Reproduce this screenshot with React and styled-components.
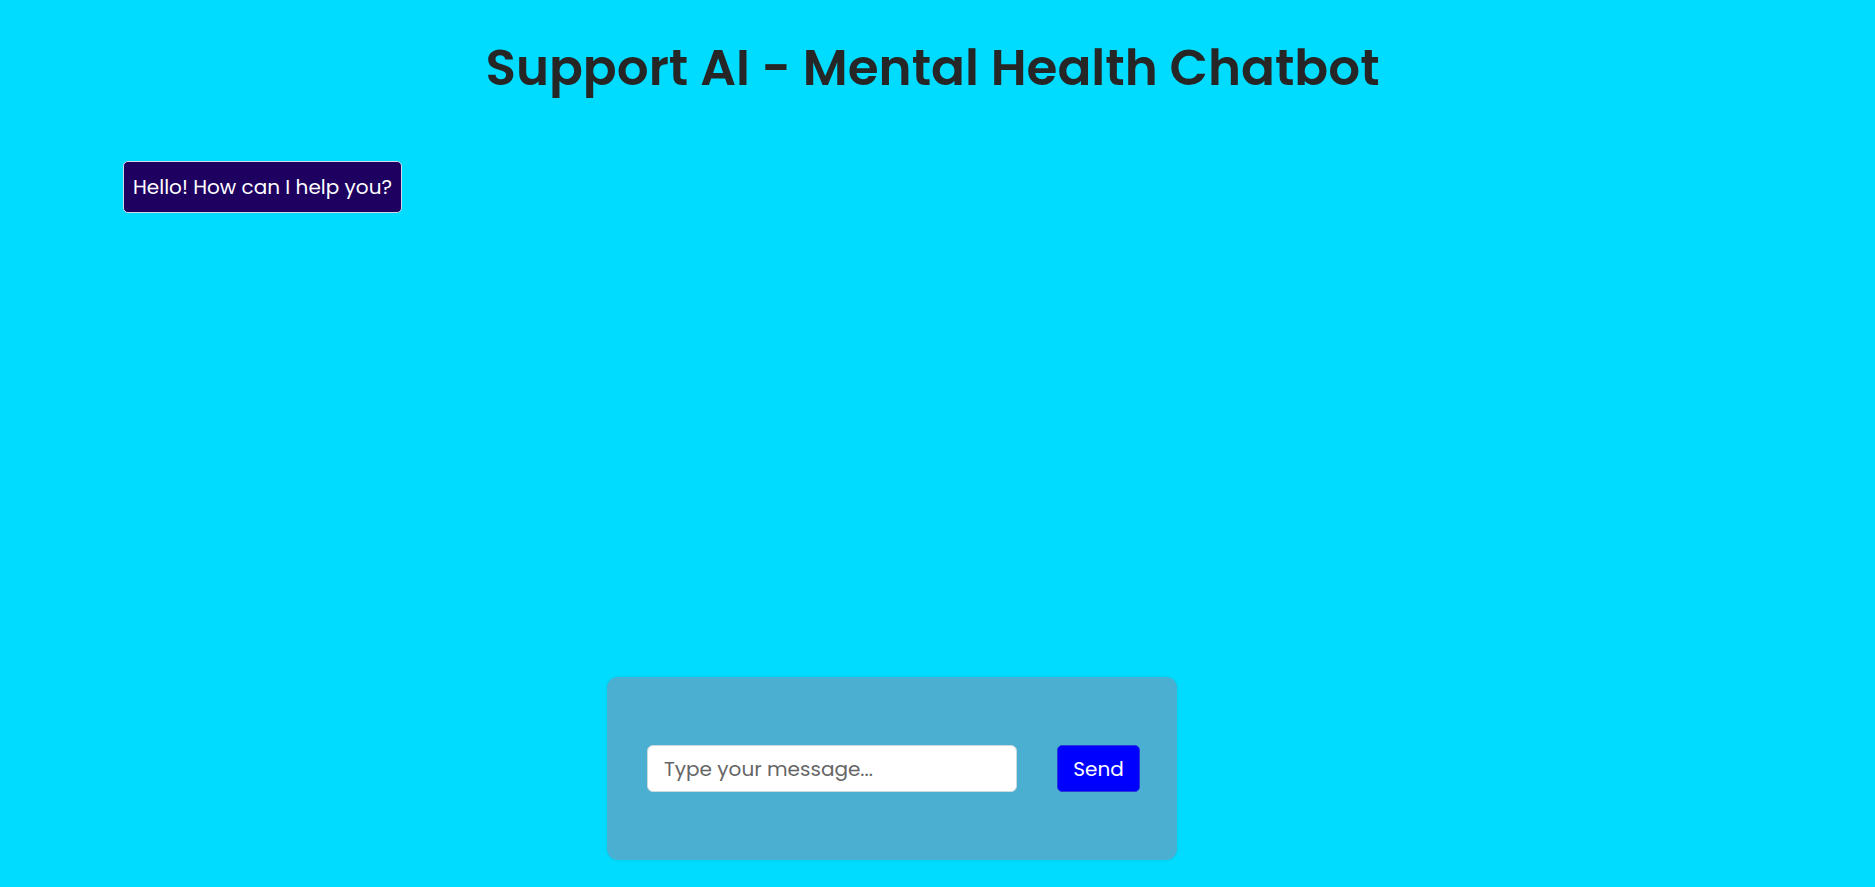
import { createGlobalStyle, styled } from "styled-components";

const GlobalStyle = createGlobalStyle`
  html, body {
    margin: 0;
    padding: 0;
    background: #00dcff;
  }
  body {
    font-family: Poppins, "Open Sans", "Liberation Sans", sans-serif;
  }
`;

const Page = styled.div`
  min-height: 887px;
  display: flex;
  flex-direction: column;
  background: #00dcff;
`;

const Title = styled.h1`
  margin: 30px 0 0;
  padding-right: 10px;
  text-align: center;
  font-size: 50px;
  line-height: 76px;
  font-weight: 600;
  color: #262626;
`;

const MessageList = styled.div`
  flex: 1;
  display: flex;
  flex-direction: column;
  align-items: flex-start;
  padding: 55px 123px 0;
`;

const Bubble = styled.div`
  box-sizing: border-box;
  height: 52px;
  padding: 0 9px;
  display: flex;
  align-items: center;
  background: ${(p) => (p.$bot ? "#1e0060" : "#0000ff")};
  color: #ffffff;
  border: 1px solid #d8d8e8;
  border-radius: 5px;
  font-size: 20px;
`;

const ChatBox = styled.div`
  box-sizing: border-box;
  width: 570px;
  height: 183px;
  margin: 0 0 27px 607px;
  padding: 0 37px 0 40px;
  display: flex;
  align-items: center;
  gap: 40px;
  background: #4aafd0;
  border-radius: 11px;
  box-shadow: 0 0 4px rgba(0, 0, 0, 0.08);
`;

const Input = styled.input`
  box-sizing: border-box;
  width: 370px;
  height: 47px;
  padding: 0 16px;
  border: 1px solid #cfd8dc;
  border-radius: 6px;
  background: #ffffff;
  font-family: inherit;
  font-size: 20px;
  color: #333;
  outline: none;

  &::placeholder {
    color: #666;
  }
`;

const SendButton = styled.button`
  box-sizing: border-box;
  width: 83px;
  height: 47px;
  border: 1px solid #2a3ad8;
  border-radius: 5px;
  background: #0000ff;
  color: #ffffff;
  font-family: inherit;
  font-size: 20px;
  cursor: pointer;
`;

const messages = [{ id: 1, bot: true, text: "Hello! How can I help you?" }];

const App = () => {
  return (
    <Page>
      <GlobalStyle />
      <Title>Support AI - Mental Health Chatbot</Title>
      <MessageList>
        {messages.map((m) => (
          <Bubble key={m.id} $bot={m.bot}>
            {m.text}
          </Bubble>
        ))}
      </MessageList>
      <ChatBox>
        <Input placeholder="Type your message..." />
        <SendButton>Send</SendButton>
      </ChatBox>
    </Page>
  );
};

export default App;
